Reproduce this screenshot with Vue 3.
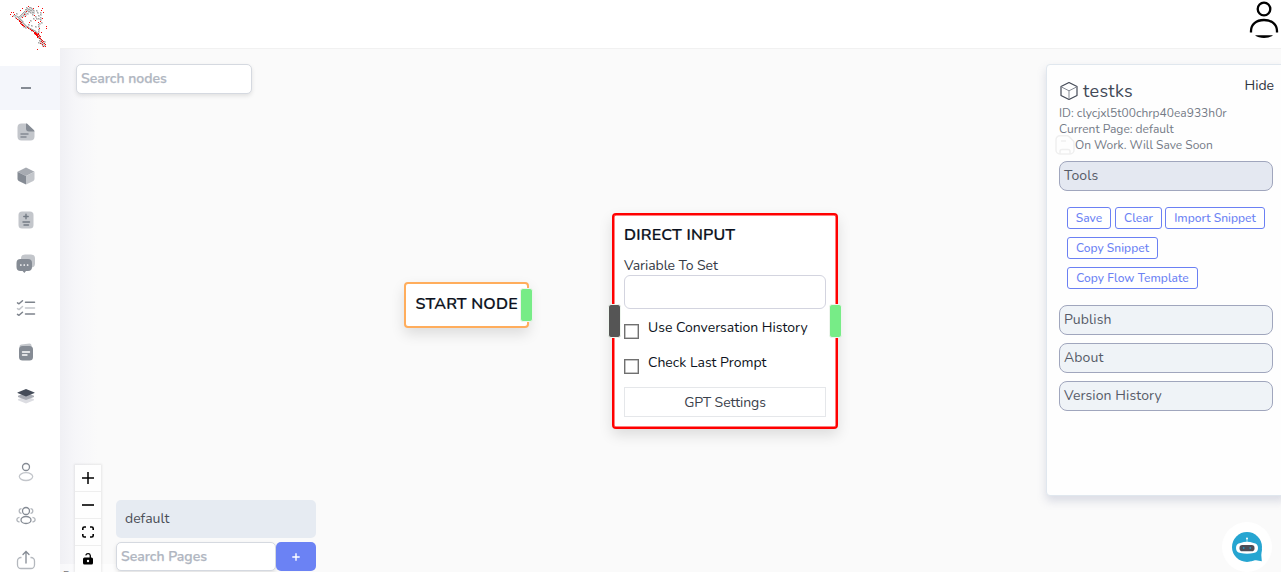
<script setup>
const redDots = [[28,6],[38,6],[22,8],[33,8],[42,8],[20,10],[26,11],[41,10],[43,12],[11,12],[13,12],[10,14],[14,14],[12,16],[24,14],[34,15],[16,18],[25,16],[22,17],[17,19],[19,20],[20,21],[21,22],[20,23],[22,24],[29,22],[38,22],[35,20],[42,18],[46,26],[46,28],[23,25],[24,26],[27,27],[28,28],[30,29],[32,30],[33,31],[34,32],[35,32],[36,33],[35,34],[37,34],[36,35],[38,36],[37,37],[39,38],[40,38],[38,33],[40,36],[41,39],[42,40],[41,41],[43,41],[40,43],[44,43],[42,44],[45,44],[43,46],[45,46],[37,49],[39,28],[41,32],[40,21],[35,33],[36,34],[37,35],[37,36],[38,34],[39,35],[19,21],[21,24],[22,25],[42,42],[31,30],[34,33]]
const grayDots = [[26,7],[27,8],[29,7],[30,7],[31,8],[32,9],[25,9],[26,9],[27,10],[28,9],[29,9],[30,10],[31,10],[33,10],[24,11],[25,12],[28,11],[29,11],[32,12],[23,12],[22,13],[24,13],[27,13],[30,12],[33,12],[32,14],[21,14],[23,15],[25,14],[20,15],[21,16],[19,16],[18,17],[17,16],[15,15],[13,15],[16,13],[15,17],[18,19],[19,18],[20,19],[21,20],[22,21],[20,22],[21,23],[22,22],[23,23],[24,24],[23,26],[25,25],[25,27],[26,26],[27,26],[28,27],[29,28],[30,28],[31,29],[31,30],[32,29],[33,30],[34,30],[35,31],[34,33],[36,32],[37,33],[38,34],[37,35],[38,37],[39,36],[39,37],[40,39],[39,40],[41,40],[40,41],[42,42],[41,43],[43,43],[42,45],[44,45],[44,41],[38,42],[38,31],[38,29],[38,26],[38,24],[39,23],[38,18],[38,15],[40,14],[40,17],[40,19],[41,22],[36,10],[37,12],[40,12],[35,16],[36,18],[33,18],[30,20],[28,24],[35,26],[31,25]]
const redPath = redDots.map(([x, y]) => `M${x} ${y}h1v1h-1z`).join('')
const grayPath = grayDots.map(([x, y]) => `M${x} ${y}h1v1h-1z`).join('')
const haloPath = grayDots.map(([x, y]) => `M${x} ${y}h2v2h-2z`).join('')
const menu = ['file', 'cube', 'card', 'chat', 'list', 'doc', 'layers']
const people = ['user', 'group', 'share']
const sections = ['Publish', 'About', 'Version History']
const options = ['Use Conversation History', 'Check Last Prompt']
</script>

<template>
  <div class="app">
    <aside class="side">
      <div class="logo">
        <svg width="60" height="66" viewBox="0 0 60 66" shape-rendering="crispEdges">
          <path :d="haloPath" fill="#d6d6d6" />
          <path :d="grayPath" fill="#a6a6a6" />
          <path :d="redPath" fill="#f80808" />
        </svg>
      </div>
      <div class="item active"><i class="dash"></i></div>
      <div v-for="m in menu" :key="m" class="item">
        <svg width="24" height="24" viewBox="0 0 24 24" fill="none">
          <g v-if="m === 'file'">
            <path d="M7.500 3.500H12L20.500 11.500V16.500a4 4 0 0 1-4 4h-9a4 4 0 0 1-4-4v-9a4 4 0 0 1 4-4z" fill="#c3c6cb" />
            <path d="M12 3.500c1 0 1.500.4 2 .9l5.600 5.300c.6.6.9 1.100.9 1.800h-5.500a3 3 0 0 1-3-3z" fill="#858b94" />
            <path d="M7 14h7M7 17h5" stroke="#858b94" stroke-width="1.500" stroke-linecap="round" />
          </g>
          <g v-else-if="m === 'cube'">
            <path d="M12 3.500l8.500 4.300L12 12 3.500 7.800z" fill="#a7abb2" />
            <path d="M3.500 7.800L12 12v8.500l-7.300-3.600a2 2 0 0 1-1.200-1.800z" fill="#858b94" />
            <path d="M20.500 7.800L12 12v8.500l7.300-3.600a2 2 0 0 0 1.200-1.800z" fill="#c3c6cb" />
          </g>
          <g v-else-if="m === 'card'">
            <rect x="4.500" y="3.500" width="15" height="17" rx="3.500" fill="#c3c6cb" />
            <path d="M12 6.300v4.400M9.800 8.500h4.400M9 14h6.500M10 17h4.500" stroke="#747b85" stroke-width="1.400" stroke-linecap="round" />
          </g>
          <g v-else-if="m === 'chat'">
            <rect x="7" y="2.500" width="14" height="13" rx="4" fill="#c3c6cb" />
            <path d="M6.500 7h7.500a4 4 0 0 1 4 4v4a4 4 0 0 1-4 4h-2l-1.700 2-1.700-2H6.500a4 4 0 0 1-4-4v-4a4 4 0 0 1 4-4z" fill="#858b94" />
            <path d="M6.800 13h.1M10.200 13h.1M13.600 13h.1" stroke="#fff" stroke-width="1.700" stroke-linecap="round" />
          </g>
          <g v-else-if="m === 'list'" stroke-width="1.500" stroke-linecap="round" stroke-linejoin="round">
            <path d="M3.500 6.800l1.500 1L8.500 4.700M11.500 6.300h9M3.500 18.300l1.500 1 3.500-3.100M11.500 18h9" stroke="#7d838c" />
            <path d="M3.500 12.600l1.500 1 3.500-3.100M11.500 12h9" stroke="#c3c6cb" />
          </g>
          <g v-else-if="m === 'doc'">
            <path d="M5.500 6.500a2 2 0 0 1 2-2l8-1a2 2 0 0 1 2 2v3h-12z" fill="#c3c6cb" />
            <rect x="5" y="6" width="14" height="14.500" rx="3.500" fill="#858b94" />
            <path d="M8.500 12h7M8.500 15h4.500" stroke="#fff" stroke-width="1.400" stroke-linecap="round" />
          </g>
          <g v-else>
            <path d="M4 15.200l8-3 8 3v1l-8 3.200-8-3.200z" fill="#dcdde2" />
            <path d="M4 11.700l8-3 8 3v1.200l-8 3.200-8-3.200z" fill="#a9acb4" />
            <path d="M3.500 8.500L12 5 20.500 8.500V9L12 12.500 3.500 9z" fill="#454c59" />
          </g>
        </svg>
      </div>
      <div class="gap"></div>
      <div v-for="m in people" :key="m" class="item">
        <svg width="24" height="24" viewBox="0 0 24 24" fill="none" stroke-width="1.300">
          <g v-if="m === 'user'">
            <circle cx="12" cy="7" r="3.500" stroke="#858b94" />
            <ellipse cx="12" cy="16.600" rx="6.700" ry="3.900" stroke="#c3c6cb" />
          </g>
          <g v-else-if="m === 'group'">
            <path d="M7.500 4.700a2.300 2.300 0 0 0 0 4.600M16.500 4.700a2.300 2.300 0 0 1 0 4.600M5.500 13.300c-3.500.6-3.500 4.200 0 4.700M18.500 13.300c3.500.6 3.500 4.200 0 4.700" stroke="#b4b8be" />
            <circle cx="12" cy="7" r="3.500" stroke="#858b94" />
            <ellipse cx="12" cy="16" rx="5" ry="3.500" stroke="#858b94" />
          </g>
          <g v-else>
            <path d="M7.500 9.500H7a3.500 3.500 0 0 0-3.500 3.500v4A3.500 3.500 0 0 0 7 20.500h10a3.500 3.500 0 0 0 3.500-3.500v-4A3.500 3.500 0 0 0 17 9.500h-.5" stroke="#b4b8be" />
            <path d="M12 15V3.800M9 6.500l3-3 3 3" stroke="#858b94" stroke-linecap="round" />
          </g>
        </svg>
      </div>
    </aside>

    <main class="main">
      <header class="top">
        <svg width="34" height="40" viewBox="0 0 34 40" fill="none" stroke="#000" stroke-width="2.300">
          <circle cx="17" cy="9" r="6.300" />
          <path d="M4 32.500v-1.500C4 24.500 9 20 17 20s13 4.500 13 11v1.500" />
          <path d="M8 35.200h18c-4 3.600-14 3.600-18 0z" fill="#000" stroke="none" />
        </svg>
      </header>
      <section class="canvas">
        <div class="shade"></div>
        <div class="input search-nodes"><span>Search nodes</span></div>

        <div class="node start">
          <span>START NODE</span>
          <i class="handle green"></i>
        </div>

        <div class="node direct">
          <h3>DIRECT INPUT</h3>
          <label class="vlabel">Variable To Set</label>
          <div class="field"></div>
          <div v-for="o in options" :key="o" class="option">
            <i class="box"></i><span>{{ o }}</span>
          </div>
          <div class="gpt"><span>GPT Settings</span></div>
          <i class="handle dark"></i>
          <i class="handle green"></i>
        </div>

        <div class="status"><span>React Flow</span></div>
        <div class="controls">
          <div><svg width="12" height="12"><path d="M6 0v12M0 6h12" stroke="#000" stroke-width="1.500" /></svg></div>
          <div><svg width="12" height="12"><path d="M0 6h12" stroke="#000" stroke-width="1.600" /></svg></div>
          <div><svg width="12" height="12" fill="none"><path d="M.8 4V2.500Q.8 1 2.300 1H4M8 1h1.700q1.500 0 1.500 1.500V4M11.200 8v1.500q0 1.500-1.500 1.500H8M4 11H2.300Q.8 11 .8 9.500V8" stroke="#000" stroke-width="1.600" /></svg></div>
          <div class="last"><svg width="12" height="14" fill="none"><path d="M3.700 3.400C4.500 1 7.900 1 8.300 3.500V6" stroke="#000" stroke-width="1.300" /><path d="M2.500 5.500h7q1.500 0 1.500 1.500v4q0 1.500-1.500 1.500h-7Q1 12.500 1 11V7q0-1.500 1.500-1.500z" fill="#000" /><circle cx="6" cy="9" r="1.200" fill="#fff" /></svg></div>
        </div>

        <div class="pages">
          <div class="page"><span>default</span></div>
          <div class="row">
            <div class="input search-pages"><span>Search Pages</span></div>
            <button class="plus"><svg width="8" height="8"><path d="M4 .3v7.400M.3 4h7.400" stroke="#fff" stroke-width="1.400" /></svg></button>
          </div>
        </div>

        <div class="panel">
          <div class="heading">
            <svg width="20" height="20" viewBox="0 0 20 20" fill="none" stroke-linejoin="round">
              <path d="M10 1.500l8 4v9l-8 4-8-4v-9z" stroke="#434956" stroke-width="1.200" />
              <path d="M2.500 6L10 9.800 17.500 6M10 9.800v8" stroke="#868b94" />
            </svg>
            <span class="name">testks</span>
            <span class="hide">Hide</span>
          </div>
          <p><span>ID: clycjxl5t00chrp40ea933h0r</span></p>
          <p><span>Current Page: default</span></p>
          <p class="work">
            <svg width="20" height="20" viewBox="0 0 20 20" fill="none" stroke="#efefef" stroke-width="1.500">
              <path d="M5 .8h7q1.200 0 2 .8l4.200 4.200q.8.8.8 2V15a4 4 0 0 1-4 4H5a4 4 0 0 1-4-4V5A4 4 0 0 1 5 .8z" />
              <path d="M5 19v-2.500q0-2 2-2h6q2 0 2 2V19M6 6h5" />
            </svg>
            <span>On Work. Will Save Soon</span>
          </p>
          <div class="acc open"><span>Tools</span></div>
          <div class="btns">
            <div><button class="b-save">Save</button><button class="b-clear">Clear</button><button class="b-import">Import Snippet</button></div>
            <div><button class="b-copy">Copy Snippet</button></div>
            <div><button class="b-flow">Copy Flow Template</button></div>
          </div>
          <div v-for="s in sections" :key="s" class="acc"><span>{{ s }}</span></div>
        </div>

        <div class="bot">
          <svg width="32" height="32" viewBox="0 0 32 32">
            <circle cx="16" cy="16" r="15" fill="#26a5d1" />
            <path d="M20 30.500Q23 29 25 29.300L30.800 30.300 30.300 24 31 17z" fill="#26a5d1" />
            <path d="M16 11V8" stroke="#9bdcf0" stroke-width="1" />
            <circle cx="16" cy="7.500" r="1" fill="#fff" />
            <path d="M9.500 12q6.500-2.600 13 0Q27 12.600 27 17t-4.500 5q-6.500 1.600-13 0Q5 21.400 5 17t4.500-5z" fill="#fff" />
            <rect x="8.500" y="14" width="15" height="6.200" rx="2.800" fill="#4d4d57" />
            <circle cx="12.700" cy="17" r=".9" fill="#2992b8" /><circle cx="19.300" cy="17" r=".9" fill="#2992b8" />
          </svg>
        </div>
      </section>
    </main>
  </div>
</template>

<style>
html, body { overflow: hidden; }
</style>

<style scoped>
* { box-sizing: border-box; }
.app { display: flex; width: 1281px; height: 572px; overflow: hidden; background: #fafafa; font-family: Nunito, Lato, "Open Sans", sans-serif; font-size: 14px; color: #212529; }
span { white-space: nowrap; }
svg { display: block; }
button { font: inherit; margin: 0; padding: 0; white-space: nowrap; }
.side { width: 60px; flex: none; background: #fff; height: 572px; overflow: hidden; }
.logo { height: 66px; }
.item { height: 44px; display: flex; align-items: center; justify-content: center; padding-right: 8px; }
.item.active { background: #f4f6fb; }
.dash { width: 10px; height: 2px; background: #858b94; }
.gap { height: 32px; }
.main { flex: 1; display: flex; flex-direction: column; }
.top { height: 49px; flex: none; background: #fff; border-bottom: 1px solid #f1f1f1; display: flex; justify-content: flex-end; }
.canvas { position: relative; flex: 1; overflow: hidden; }
.shade { position: absolute; left: 0; top: 0; width: 38px; height: 100%; background: linear-gradient(90deg, #f0f0f4, #f6f6f9 40%, #fafafa); }
.input { display: flex; align-items: center; border: 1px solid #d5d9e0; border-radius: 5px; background: #fff; color: #b0b6c1; padding: 0 0 1px 4px; font-weight: 600; -webkit-text-stroke: .25px #b0b6c1; box-shadow: 0 2px 4px rgba(0,0,0,.1); }
.search-nodes { position: absolute; left: 16px; top: 15px; width: 176px; height: 30px; }

.node { position: absolute; background: #fff; border-radius: 4px; box-shadow: 0 6px 14px rgba(0,0,0,.12); color: #0c1220; }
.start { left: 344px; top: 233px; width: 125px; height: 46px; border: 2px solid #ffad5c; padding: 10px 0 0 9.500px; font-size: 16px; line-height: 20px; font-weight: 600; letter-spacing: .2px; -webkit-text-stroke: .2px #0c1220; }
.direct { left: 552px; top: 163.500px; width: 226px; height: 216px; border: 2px solid #ff0000; box-shadow: inset 0 0 0 .5px #ff0000, 0 6px 14px rgba(0,0,0,.12); padding: 9px 10px; }
.handle { position: absolute; width: 13px; height: 34px; border: 1px solid #eef5ee; border-radius: 3px; }
.green { background: #77ec87; right: -6px; }
.dark { background: #555; left: -6px; top: 89px; }
.start .green { top: 4px; }
.direct .green { top: 89px; }
h3 { margin: 0; font-size: 16px; line-height: 22px; font-weight: 600; letter-spacing: .18px; -webkit-text-stroke: .2px #0c1220; }
.vlabel { display: block; line-height: 20px; margin-top: 10px; color: #343a46; letter-spacing: -.08px; }
.field { height: 34px; border: 1px solid #d3d4df; border-radius: 6px; margin-top: -1px; margin-bottom: 8px; }
.option { display: flex; height: 35px; }
.option span { line-height: 20px; margin: 1px 0 0 9px; }
.box { width: 15px; height: 15px; border: 1px solid #707070; box-shadow: inset 0 0 0 .5px #8a8a8a; margin-top: 7px; flex: none; }
.gpt { height: 30px; border: 1px solid #e5e7ea; display: flex; align-items: center; justify-content: center; padding-top: 2px; color: #3b414b; letter-spacing: -.08px; }

.controls { position: absolute; left: 15px; top: 416px; width: 26px; box-shadow: 0 0 2px 1px rgba(0,0,0,.08); background: #fefefe; }
.controls div { height: 27px; border-bottom: 1px solid #eee; display: flex; align-items: center; justify-content: center; }
.controls .last { height: 26px; border-bottom: 0; }
.pages { position: absolute; left: 56px; top: 451px; width: 200px; }
.page { height: 38px; border-radius: 5px; background: #e6ebf2; padding: 0 0 2px 9px; display: flex; align-items: center; color: #4a4e57; }
.row { display: flex; margin-top: 4px; }
.search-pages { width: 160px; height: 29px; }
.plus { width: 40px; height: 29px; border: 0; border-radius: 5px; background: #6b82f4; display: flex; align-items: center; justify-content: center; }
.status { position: absolute; left: 0; top: 515px; width: 58px; height: 16px; padding: 4px 3px 0; background: rgba(255,255,255,.5); font-size: 10px; line-height: 14px; color: #777; }

.panel { position: absolute; left: 986px; top: 15px; width: 240px; height: 432px; background: #fefefe; border: 1px solid #e0e7ee; border-radius: 4px; box-shadow: 0 5px 10px rgba(100,110,150,.22); padding: 14px 12px 0; }
.heading { display: flex; align-items: center; height: 24px; color: #424957; }
.name { font-size: 18px; margin-left: 4px; line-height: 24px; letter-spacing: .3px; }
.hide { position: absolute; left: 197.500px; top: 11px; line-height: 20px; color: #2e333d; }
p { margin: 0; height: 16px; line-height: 16px; font-size: 12px; color: #747a86; }
.heading + p { margin-top: 2px; }
.work { display: flex; align-items: center; }
.work svg { margin: 0 0 0 -4px; flex: none; }
.acc { width: 214px; height: 30px; border: 1px solid #a0a6bd; border-radius: 8px; background: #eff3f7; padding-left: 4px; line-height: 27px; color: #565b67; margin-bottom: 8px; letter-spacing: .1px; }
.acc.open { background: #e4e8f1; margin-top: 8px; }
.btns { padding: 8px 0 0 8px; height: 106px; }
.btns div { display: flex; gap: 4px; height: 30px; }
.btns button { height: 22px; border: 1px solid #6b80f3; border-radius: 3px; background: #fff; color: #6b82f4; font-size: 12px; font-weight: 500; line-height: 20px; letter-spacing: .03px; }
.btns .b-save { width: 44px; }
.btns .b-clear { width: 47px; }
.btns .b-import { width: 100px; margin-left: -1px; }
.btns .b-copy { width: 91px; }
.btns .b-flow { width: 131px; }
.bot { position: absolute; left: 1162px; top: 473px; width: 50px; height: 50px; border-radius: 50%; background: #fff; display: flex; align-items: center; justify-content: center; }
</style>
